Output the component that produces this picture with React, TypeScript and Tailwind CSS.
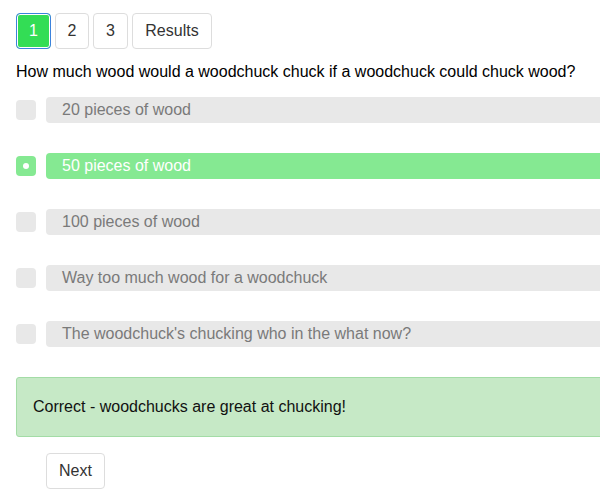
import React from "react";

const options = [
  "20 pieces of wood",
  "50 pieces of wood",
  "100 pieces of wood",
  "Way too much wood for a woodchuck",
  "The woodchuck's chucking who in the what now?",
];

export default function App() {
  const selected = 1;
  return (
    <div
      className="w-[600px] h-[500px] overflow-hidden bg-white text-[16px] text-black"
      style={{ fontFamily: '"Liberation Sans", Arial, sans-serif' }}
    >
      <div className="w-[680px] pl-4 pt-[13px]">
        <div className="flex gap-[4px] h-[36px]">
          <button className="w-[35px] h-[36px] rounded-[4px] border border-[#3b82dc] bg-[#33dd55] shadow-[inset_0_0_0_1px_#ffffff] text-white flex items-center justify-center">
            1
          </button>
          <button className="w-[34px] h-[36px] rounded-[4px] border border-[#dddddd] bg-white text-[#333] flex items-center justify-center">
            2
          </button>
          <button className="w-[35px] h-[36px] rounded-[4px] border border-[#dddddd] bg-white text-[#333] flex items-center justify-center">
            3
          </button>
          <button className="w-[80px] h-[36px] rounded-[4px] border border-[#dddddd] bg-white text-[#333] flex items-center justify-center">
            Results
          </button>
        </div>
        <div className="mt-[14px] leading-[18px]">
          How much wood would a woodchuck chuck if a woodchuck could chuck wood?
        </div>
        <div className="mt-[16px] flex flex-col gap-[30px]">
          {options.map((o, i) => {
            const sel = i === selected;
            return (
              <div key={i} className="flex items-center h-[26px] gap-[10px]">
                <div
                  className={
                    "w-[20px] h-[20px] rounded-[4px] flex items-center justify-center " +
                    (sel ? "bg-[#85e992]" : "bg-[#e8e8e8]")
                  }
                >
                  {sel && <div className="w-[6px] h-[6px] rounded-full bg-white" />}
                </div>
                <div
                  className={
                    "flex-1 h-[26px] rounded-[4px] pl-[16px] flex items-center " +
                    (sel ? "bg-[#85e992] text-white" : "bg-[#e8e8e8] text-[#7a7a7a]")
                  }
                >
                  {o}
                </div>
              </div>
            );
          })}
        </div>
        <div className="mt-[30px] h-[60px] rounded-[3px] border border-[#a3dca6] bg-[#c6e9c6] pl-[16px] flex items-center text-[#111]">
          Correct - woodchucks are great at chucking!
        </div>
        <div className="mt-[16px] pl-[30px]">
          <button className="w-[59px] h-[36px] rounded-[4px] border border-[#dddddd] bg-white text-[#333] flex items-center justify-center">
            Next
          </button>
        </div>
      </div>
    </div>
  );
}
